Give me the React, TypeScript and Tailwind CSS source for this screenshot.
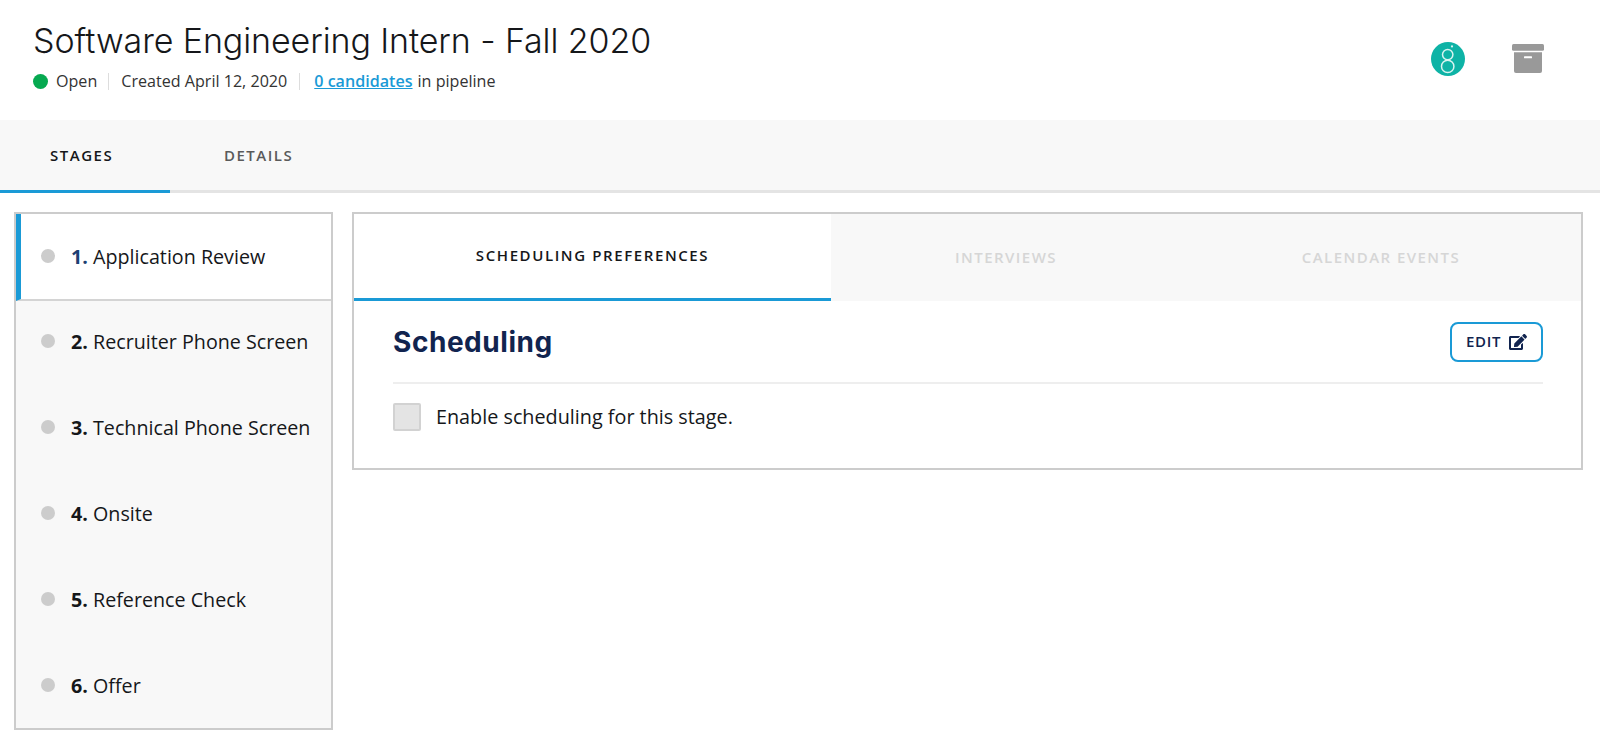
import { FaEdit } from 'react-icons/fa';

const stages = [
  'Application Review',
  'Recruiter Phone Screen',
  'Technical Phone Screen',
  'Onsite',
  'Reference Check',
  'Offer',
];

const GreenhouseLogo = () => (
  <svg width="34" height="34" viewBox="0 0 34 34">
    <circle cx="17" cy="17" r="17" fill="#0eb3a6" />
    <circle cx="16.7" cy="12.6" r="5.2" fill="none" stroke="#d8f3f0" strokeWidth="1.5" />
    <circle cx="16.7" cy="24.4" r="6.2" fill="none" stroke="#d8f3f0" strokeWidth="1.5" />
    <circle cx="21" cy="4.4" r="1.1" fill="#d8f3f0" />
  </svg>
);

const ArchiveBox = () => (
  <svg width="32" height="29" viewBox="0 0 32 29">
    <rect x="0" y="0" width="32" height="6.7" rx="1.5" fill="#999999" />
    <path d="M2 8.3h28v18.7a2 2 0 0 1-2 2H4a2 2 0 0 1-2-2z" fill="#999999" />
    <rect x="12" y="12.3" width="8" height="2" rx="0.5" fill="#ffffff" />
  </svg>
);

const App = () => {
  return (
    <div className="w-[1600px] h-[748px] bg-white overflow-hidden text-[#15171a] font-['Open_Sans',sans-serif]">
      <div className="h-[120px] pl-[33px] pr-[56px] flex justify-between">
        <div>
          <h1 className="pt-[19px] text-[34px] leading-[44px] font-light font-['Inter',sans-serif] tracking-[-0.1px]">
            Software Engineering Intern - Fall 2020
          </h1>
          <div className="mt-[8px] flex items-center text-[16.1px] leading-[20px] text-[#333333]">
            <span className="w-[15px] h-[15px] rounded-full bg-[#06a950] mr-[8px]"></span>
            <span>Open</span>
            <span className="w-px h-[17px] bg-[#dddddd] ml-[11px] mr-[12px]"></span>
            <span>Created April 12, 2020</span>
            <span className="w-px h-[17px] bg-[#dddddd] ml-[12px] mr-[14px]"></span>
            <a className="text-[#1a9ad6] underline font-semibold">0 candidates</a>
            <span className="ml-[5px]">in pipeline</span>
          </div>
        </div>
        <div className="flex items-start gap-[47px] pt-[43px]">
          <div className="-mt-px">
            <GreenhouseLogo />
          </div>
          <div className="mt-px">
            <ArchiveBox />
          </div>
        </div>
      </div>

      <div className="h-[73px] bg-[#f8f8f8] border-b-[3px] border-[#e4e4e4] flex">
        <div className="w-[170px] h-[73px] border-b-[3px] border-[#1a9ad6] pl-[50px] flex items-center text-[15px] font-semibold tracking-[1.5px] text-[#15171a]">
          STAGES
        </div>
        <div className="h-[70px] pl-[54px] flex items-center text-[15px] font-semibold tracking-[1.5px] text-[#5a5a5a]">
          DETAILS
        </div>
      </div>

      <div className="flex items-start pl-[14px] pt-[19px] gap-[19px]">
        <div className="w-[319px] h-[518px] border-2 border-[#cccccc] bg-[#f8f8f8] shrink-0 overflow-hidden">
          {stages.map((stage, i) => (
            <div
              key={stage}
              className={
                i === 0
                  ? 'h-[87px] bg-white border-l-[5px] border-[#1a9ad6] border-b-2 border-b-[#d4d4d4] pl-[20px] flex items-center'
                  : 'h-[86px] pl-[25px] pb-[4px] flex items-center'
              }
            >
              <span className="w-[14px] h-[14px] rounded-full bg-[#cccccc] -mt-[2px] mr-[16px]"></span>
              <span className="text-[19.7px] leading-[24px] text-[#15171a]">
                <strong className={i === 0 ? 'font-bold text-[#1d3f72]' : 'font-bold'}>{i + 1}.</strong> {stage}
              </span>
            </div>
          ))}
        </div>

        <div className="w-[1231px] h-[258px] border-2 border-[#cccccc] shrink-0">
          <div className="h-[87px] flex">
            <div className="w-[477px] pb-[1px] border-b-[3px] border-[#1a9ad6] flex items-center justify-center text-[15px] font-semibold tracking-[1.6px] text-[#15171a]">
              SCHEDULING PREFERENCES
            </div>
            <div className="flex-1 bg-[#f8f8f8] flex items-center text-[15px] font-semibold tracking-[1.45px] text-[#d6d6d6]">
              <span className="w-[350px] text-center">INTERVIEWS</span>
              <span className="w-[400px] text-center">CALENDAR EVENTS</span>
            </div>
          </div>
          <div className="pl-[39px] pr-[38px]">
            <div className="h-[83px] border-b-2 border-[#eeeeee] flex items-center justify-between">
              <h2 className="text-[28px] font-bold font-['Inter',sans-serif] tracking-[0.55px] text-[#11244f]">Scheduling</h2>
              <button className="w-[93px] h-[40px] border-2 border-[#1a9ad6] rounded-[8px] flex items-center justify-center gap-[8px] text-[15px] font-semibold tracking-[0.7px] text-[#11244f]">
                EDIT
                <FaEdit size={18} />
              </button>
            </div>
            <div className="mt-[19px] flex items-center">
              <span className="w-[28px] h-[28px] border-2 border-[#d2d2d2] bg-[#e4e4e4] rounded-[2px] mr-[15px]"></span>
              <span className="text-[19.8px] leading-[28px] text-[#15171a]">Enable scheduling for this stage.</span>
            </div>
          </div>
        </div>
      </div>
    </div>
  );
};

export default App;
